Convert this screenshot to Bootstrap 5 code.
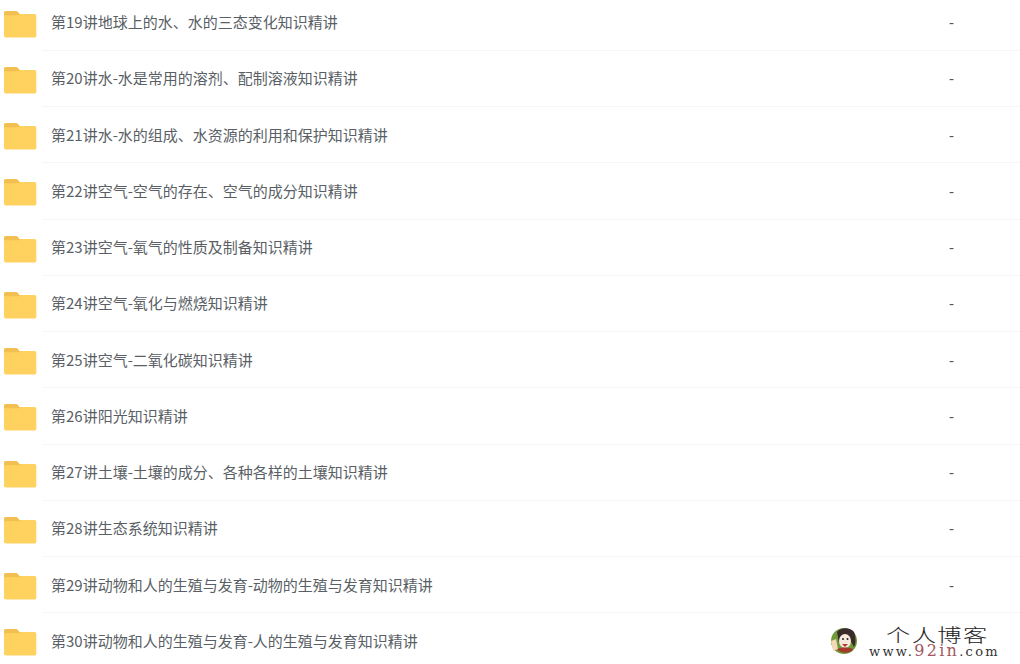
<!DOCTYPE html>
<html lang="zh">
<head>
<meta charset="utf-8">
<title>文件列表</title>
<link href="https://cdn.jsdelivr.net/npm/bootstrap@5.3.0/dist/css/bootstrap.min.css" rel="stylesheet">
<style>
html, body { height: 664px; overflow: hidden; background: #fff; }
.file-list { margin-top: -5.500px; }
.file-row { height: 56.250px; padding-left: 3px; }
.file-icon { width: 34px; height: 28px; flex: none; margin-top: 2px; }
.file-body { height: 100%; margin-left: 5px; padding-left: 9px; border-bottom: 1px solid #f6f6f6; }
.file-name { font: 15px/20px "Noto Sans CJK SC", "Liberation Sans", sans-serif; color: #5a5f66; }
.file-size { width: 71px; flex: none; padding-top: 2px; font: 15px/20px "Liberation Sans", sans-serif; color: #555; }
.wm { position: absolute; left: 828px; top: 626px; width: 192px; height: 38px; background: #fff; }
.wm-face { position: absolute; left: 0; top: 0; width: 30px; height: 30px; }
.wm-title { position: absolute; left: 58px; top: 0; font: 300 18px/17px "Noto Sans CJK SC", serif; letter-spacing: 1px; color: #222; white-space: nowrap; transform: scaleX(1.350); transform-origin: left center; }
.wm-url { position: absolute; left: 41px; top: 17px; font: 13px/16px "DejaVu Serif", serif; letter-spacing: 2.300px; color: #333; white-space: nowrap; }
.wm-url span { color: #a3585f; font-size: 16px; }
</style>
</head>
<body>
<svg width="0" height="0" class="d-block position-absolute">
  <defs>
    <symbol id="folder" viewBox="0 0 34 28">
      <path d="M1 3.200C1 1.900 1.900 1 3.200 1h9.300c1 0 1.700.4 2.300 1.100l1.500 2H31.500c1 0 1.800.8 1.800 1.800v19.900c0 1-.8 1.800-1.800 1.800H3c-1.100 0-2-.9-2-2z" fill="#ffd25f"/>
      <path d="M1 3.200C1 1.900 1.900 1 3.200 1h9.300c1 0 1.700.4 2.300 1.100l2.500 3.100H1z" fill="#f2c050"/>
    </symbol>
  </defs>
</svg>
<main class="file-list">
  <div class="file-row d-flex align-items-center"><svg class="file-icon"><use href="#folder"/></svg><div class="file-body flex-grow-1 d-flex align-items-center justify-content-between"><span class="file-name">第19讲地球上的水、水的三态变化知识精讲</span><span class="file-size">-</span></div></div>
  <div class="file-row d-flex align-items-center"><svg class="file-icon"><use href="#folder"/></svg><div class="file-body flex-grow-1 d-flex align-items-center justify-content-between"><span class="file-name">第20讲水-水是常用的溶剂、配制溶液知识精讲</span><span class="file-size">-</span></div></div>
  <div class="file-row d-flex align-items-center"><svg class="file-icon"><use href="#folder"/></svg><div class="file-body flex-grow-1 d-flex align-items-center justify-content-between"><span class="file-name">第21讲水-水的组成、水资源的利用和保护知识精讲</span><span class="file-size">-</span></div></div>
  <div class="file-row d-flex align-items-center"><svg class="file-icon"><use href="#folder"/></svg><div class="file-body flex-grow-1 d-flex align-items-center justify-content-between"><span class="file-name">第22讲空气-空气的存在、空气的成分知识精讲</span><span class="file-size">-</span></div></div>
  <div class="file-row d-flex align-items-center"><svg class="file-icon"><use href="#folder"/></svg><div class="file-body flex-grow-1 d-flex align-items-center justify-content-between"><span class="file-name">第23讲空气-氧气的性质及制备知识精讲</span><span class="file-size">-</span></div></div>
  <div class="file-row d-flex align-items-center"><svg class="file-icon"><use href="#folder"/></svg><div class="file-body flex-grow-1 d-flex align-items-center justify-content-between"><span class="file-name">第24讲空气-氧化与燃烧知识精讲</span><span class="file-size">-</span></div></div>
  <div class="file-row d-flex align-items-center"><svg class="file-icon"><use href="#folder"/></svg><div class="file-body flex-grow-1 d-flex align-items-center justify-content-between"><span class="file-name">第25讲空气-二氧化碳知识精讲</span><span class="file-size">-</span></div></div>
  <div class="file-row d-flex align-items-center"><svg class="file-icon"><use href="#folder"/></svg><div class="file-body flex-grow-1 d-flex align-items-center justify-content-between"><span class="file-name">第26讲阳光知识精讲</span><span class="file-size">-</span></div></div>
  <div class="file-row d-flex align-items-center"><svg class="file-icon"><use href="#folder"/></svg><div class="file-body flex-grow-1 d-flex align-items-center justify-content-between"><span class="file-name">第27讲土壤-土壤的成分、各种各样的土壤知识精讲</span><span class="file-size">-</span></div></div>
  <div class="file-row d-flex align-items-center"><svg class="file-icon"><use href="#folder"/></svg><div class="file-body flex-grow-1 d-flex align-items-center justify-content-between"><span class="file-name">第28讲生态系统知识精讲</span><span class="file-size">-</span></div></div>
  <div class="file-row d-flex align-items-center"><svg class="file-icon"><use href="#folder"/></svg><div class="file-body flex-grow-1 d-flex align-items-center justify-content-between"><span class="file-name">第29讲动物和人的生殖与发育-动物的生殖与发育知识精讲</span><span class="file-size">-</span></div></div>
  <div class="file-row d-flex align-items-center"><svg class="file-icon"><use href="#folder"/></svg><div class="file-body flex-grow-1 d-flex align-items-center justify-content-between"><span class="file-name">第30讲动物和人的生殖与发育-人的生殖与发育知识精讲</span></div></div>
</main>
<div class="wm">
  <svg class="wm-face" viewBox="0 0 30 30">
    <circle cx="16" cy="15" r="13" fill="#6f9a3c"/>
    <path d="M9 6c4-5 13-5 17 0 2 5 2 12 0 15l-5-9-7-1-3 6z" fill="#3a2a2a"/>
    <ellipse cx="17" cy="15" rx="6" ry="7" fill="#f7e9dc"/>
    <circle cx="15" cy="13" r="1" fill="#222"/><circle cx="19.500" cy="13" r="1" fill="#222"/>
    <path d="M14 18h6l-3 3z" fill="#b3392f"/>
    <path d="M9 23c4-2 12-2 16 0-2 5-13 5-16 0z" fill="#a33a2a"/>
    <path d="M3 15l5-2 2 10-5 2z" fill="#f3d9b8"/>
  </svg>
  <div class="wm-title">个人博客</div>
  <div class="wm-url">www.<span>92in</span>.com</div>
</div>
</body>
</html>
